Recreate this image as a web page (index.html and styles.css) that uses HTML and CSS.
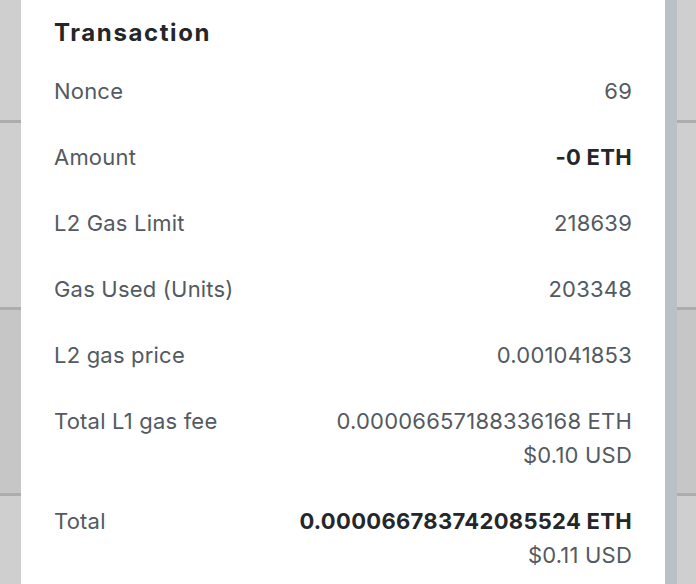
FILE: index.html
```html
<!DOCTYPE html>
<html>
<head>
<meta charset="utf-8">
<link rel="stylesheet" href="styles.css">
</head>
<body>
<div class="screen">
  <div class="side side-left"></div>
  <section class="panel">
    <h2 class="title">Transaction</h2>
    <div class="row">
      <div class="label">Nonce</div>
      <div class="value">69</div>
    </div>
    <div class="row">
      <div class="label">Amount</div>
      <div class="value strong">-0 ETH</div>
    </div>
    <div class="row">
      <div class="label">L2 Gas Limit</div>
      <div class="value">218639</div>
    </div>
    <div class="row">
      <div class="label">Gas Used (Units)</div>
      <div class="value">203348</div>
    </div>
    <div class="row">
      <div class="label">L2 gas price</div>
      <div class="value">0.001041853</div>
    </div>
    <div class="row">
      <div class="label">Total L1 gas fee</div>
      <div class="value">
        <div>0.00006657188336168 ETH</div>
        <div>$0.10 USD</div>
      </div>
    </div>
    <div class="row">
      <div class="label">Total</div>
      <div class="value">
        <div class="strong">0.000066783742085524 ETH</div>
        <div>$0.11 USD</div>
      </div>
    </div>
  </section>
  <div class="side-border"></div>
  <div class="side side-right"></div>
</div>
</body>
</html>
```
FILE: styles.css
```css
html, body {
  margin: 0;
  padding: 0;
}
body {
  width: 696px;
  height: 584px;
  overflow: hidden;
  font-family: "Inter", "Liberation Sans", sans-serif;
}
.screen {
  display: flex;
  height: 584px;
}
.side {
  background:
    linear-gradient(to bottom,
      #cfcfcf 0, #cfcfcf 120px,
      #adadad 120px, #adadad 123px,
      #cfcfcf 123px, #cfcfcf 307px,
      #adadad 307px, #adadad 310px,
      #c6c6c6 310px, #c6c6c6 493px,
      #adadad 493px, #adadad 496px,
      #cfcfcf 496px);
}
.side-left {
  width: 21px;
  flex: none;
}
.side-right {
  flex: 1;
}
.side-border {
  width: 12px;
  flex: none;
  background: #bbc0c5;
}
.panel {
  width: 644px;
  flex: none;
  background: #ffffff;
  box-sizing: border-box;
  padding: 16px 33px 0 33px;
}
.title {
  margin: 0 0 24px 0;
  font-size: 24px;
  line-height: 34px;
  font-weight: 700;
  letter-spacing: 1.6px;
  color: #24272a;
}
.row {
  display: flex;
  justify-content: space-between;
  align-items: flex-start;
  margin-bottom: 32px;
  font-size: 22px;
  line-height: 34px;
  color: #535a61;
  letter-spacing: 0.2px;
}
.value {
  text-align: right;
}
.strong {
  font-weight: 700;
  color: #24272a;
  letter-spacing: 0.3px;
}
```
